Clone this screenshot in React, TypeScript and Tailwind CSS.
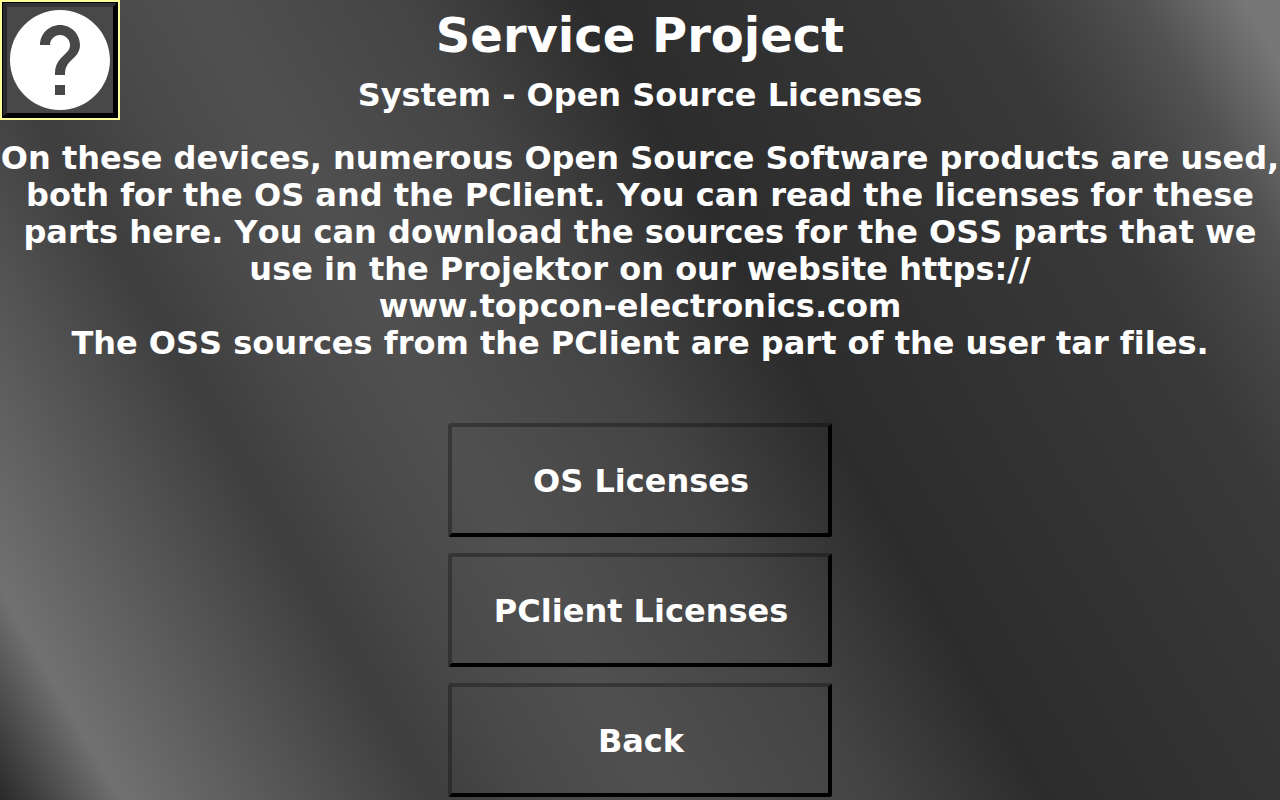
import { ReactNode } from "react";

interface MenuButtonProps {
  children: ReactNode;
}

const MenuButton = ({ children }: MenuButtonProps) => {
  return (
    <button
      type="button"
      className="w-full h-[114px] pt-[2px] pl-[2px] rounded-[3px] border-4 border-t-black/30 border-l-black/30 border-r-black border-b-black text-[32px] font-bold"
    >
      {children}
    </button>
  );
};

const HelpButton = () => {
  return (
    <button
      type="button"
      aria-label="Help"
      className="absolute left-0 top-0 size-[120px] border-2 border-[#ffff99] bg-black p-px"
    >
      <span className="flex size-full items-center justify-center rounded-[2px] border-4 border-t-[#333333] border-l-[#2b2b2b] border-r-black border-b-black bg-[#484848]">
        <svg viewBox="2 2 20 20" className="size-[100px] shrink-0">
          <path
            fill="#ffffff"
            d="M12 2C6.48 2 2 6.48 2 12s4.48 10 10 10 10-4.48 10-10S17.52 2 12 2zm1 17h-2v-2h2v2zm2.07-7.75l-.9.92C13.45 12.9 13 13.5 13 15h-2v-.5c0-1.1.45-2.1 1.17-2.83l1.24-1.26c.37-.36.59-.86.59-1.41 0-1.1-.9-2-2-2s-2 .9-2 2H8c0-2.21 1.79-4 4-4s4 1.79 4 4c0 .88-.36 1.68-.93 2.25z"
          />
        </svg>
      </span>
    </button>
  );
};

const App = () => {
  return (
    <main className="relative min-h-screen overflow-hidden bg-[linear-gradient(60deg,#292929_0%,#717171_7%,#3e3e3e_25%,#494949_31%,#505050_38%,#444444_50%,#2c2c2c_60%,#393939_83%,#454545_88%,#525252_92%,#777777_98%)] font-['DejaVu_Sans',sans-serif] font-bold text-white text-center [font-kerning:none] [font-variant-ligatures:none]">
      <HelpButton />
      <header>
        <h1 className="pt-[5px] text-[48px] leading-[60px]">Service Project</h1>
        <h2 className="pt-3 text-[32px] leading-[37px]">
          System - Open Source Licenses
        </h2>
      </header>
      <p className="pt-[26px] text-[32px] leading-[37px]">
        On these devices, numerous Open Source Software products are used, both
        for the OS and the PClient. You can read the licenses for these parts
        here. You can download the sources for the OSS parts that we use in the
        Projektor on our website https://
        <br />
        www.topcon-electronics.com
        <br />
        The OSS sources from the PClient are part of the user tar files.
      </p>
      <nav className="mx-auto mt-[61px] flex w-[30%] flex-col gap-4">
        <MenuButton>OS Licenses</MenuButton>
        <MenuButton>PClient Licenses</MenuButton>
        <MenuButton>Back</MenuButton>
      </nav>
    </main>
  );
};

export default App;
